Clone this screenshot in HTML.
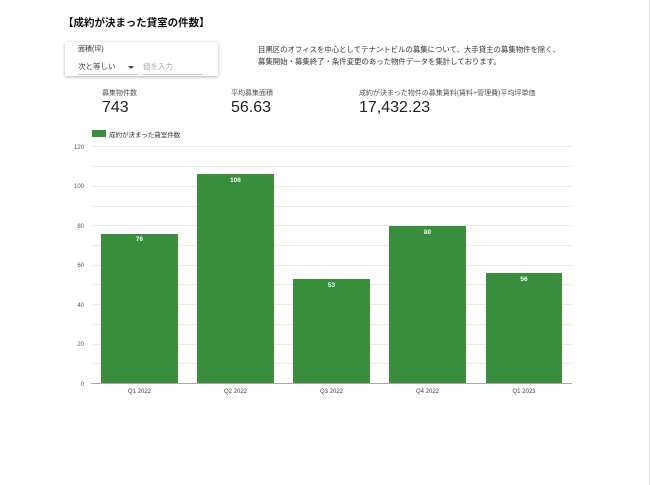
<!DOCTYPE html>
<html><head><meta charset="utf-8"><style>
body{margin:0;width:650px;height:485px;background:#fff;position:relative;overflow:hidden;font-family:"Liberation Sans","Noto Sans CJK JP",sans-serif;color:#212121}
.a{position:absolute;white-space:nowrap}
</style></head><body>
<div style="position:absolute;right:0;top:0;width:1px;height:485px;background:#e0e0e0"></div>
<div class="a" style="left:63px;top:15px;font-size:10.5px;font-weight:bold;color:#111">【成約が決まった貸室の件数】</div>
<div class="a" style="left:65px;top:42px;width:153px;height:34px;background:#fff;box-shadow:0 1px 3px rgba(0,0,0,.3)"></div>
<div class="a" style="left:78px;top:44px;font-size:7px;color:#333">面積(坪)</div>
<div class="a" style="left:78px;top:61px;font-size:7.5px;color:#444">次と等しい</div>
<div class="a" style="left:128px;top:66px;width:0;height:0;border-left:3px solid transparent;border-right:3px solid transparent;border-top:3px solid #444"></div>
<div class="a" style="left:78px;top:74px;width:60px;height:1px;background:#ccc"></div>
<div class="a" style="left:143px;top:61px;font-size:7.5px;color:#aaa">値を入力</div>
<div class="a" style="left:143px;top:74px;width:60px;height:1px;background:#ccc"></div>
<div class="a" style="left:258px;top:44px;font-size:7.4px;line-height:12px;color:#333">目黒区のオフィスを中心としてテナントビルの募集について、大手貸主の募集物件を除く、<br>募集開始・募集終了・条件変更のあった物件データを集計しております。</div>
<div class="a" style="left:102px;top:88px;font-size:7px;color:#555">募集物件数</div>
<div class="a" style="left:102px;top:99px;font-size:16px;color:#222">743</div>
<div class="a" style="left:231px;top:88px;font-size:7px;color:#555">平均募集面積</div>
<div class="a" style="left:231px;top:99px;font-size:16px;color:#222">56.63</div>
<div class="a" style="left:359px;top:88px;font-size:7px;color:#555">成約が決まった物件の募集賃料(賃料+管理費)平均坪単価</div>
<div class="a" style="left:359px;top:99px;font-size:16px;color:#222">17,432.23</div>
<div class="a" style="left:92px;top:130px;width:14px;height:7px;background:#388e3c"></div>
<div class="a" style="left:109px;top:129px;font-size:6.5px;color:#333">成約が決まった貸室件数</div>
<svg class="a" style="left:0;top:0" width="650" height="485" font-family="Liberation Sans, sans-serif">
<g stroke="#ebebeb" stroke-width="1">
<line x1="91" x2="572" y1="146.5" y2="146.5"/><line x1="91" x2="572" y1="166.5" y2="166.5"/><line x1="91" x2="572" y1="186.5" y2="186.5"/><line x1="91" x2="572" y1="206.5" y2="206.5"/><line x1="91" x2="572" y1="225.5" y2="225.5"/><line x1="91" x2="572" y1="245.5" y2="245.5"/><line x1="91" x2="572" y1="265.5" y2="265.5"/><line x1="91" x2="572" y1="284.5" y2="284.5"/><line x1="91" x2="572" y1="304.5" y2="304.5"/><line x1="91" x2="572" y1="324.5" y2="324.5"/><line x1="91" x2="572" y1="344.5" y2="344.5"/><line x1="91" x2="572" y1="363.5" y2="363.5"/>
</g>
<line x1="91" x2="572" y1="383.5" y2="383.5" stroke="#aaa"/>
<g font-size="6" fill="#555" text-anchor="end">
<text x="84" y="149">120</text><text x="84" y="188">100</text><text x="84" y="228">80</text><text x="84" y="267">60</text><text x="84" y="307">40</text><text x="84" y="346">20</text><text x="84" y="386">0</text>
</g>
<g fill="#388e3c">
<rect x="101" y="234" width="77" height="149"/><rect x="197" y="174" width="77" height="209"/><rect x="293" y="279" width="77" height="104"/><rect x="389" y="226" width="77" height="157"/><rect x="486" y="273" width="76" height="110"/>
</g>
<g font-size="6.5" fill="#fff" text-anchor="middle" font-weight="bold">
<text x="139.5" y="241">76</text><text x="235.5" y="182">106</text><text x="331.5" y="287">53</text><text x="427.5" y="234">80</text><text x="524" y="281">56</text>
</g>
<g font-size="6" fill="#444" text-anchor="middle">
<text x="139.5" y="393">Q1 2022</text><text x="235.5" y="393">Q2 2022</text><text x="331.5" y="393">Q3 2022</text><text x="427.5" y="393">Q4 2022</text><text x="524" y="393">Q1 2023</text>
</g>
</svg>
</body></html>
